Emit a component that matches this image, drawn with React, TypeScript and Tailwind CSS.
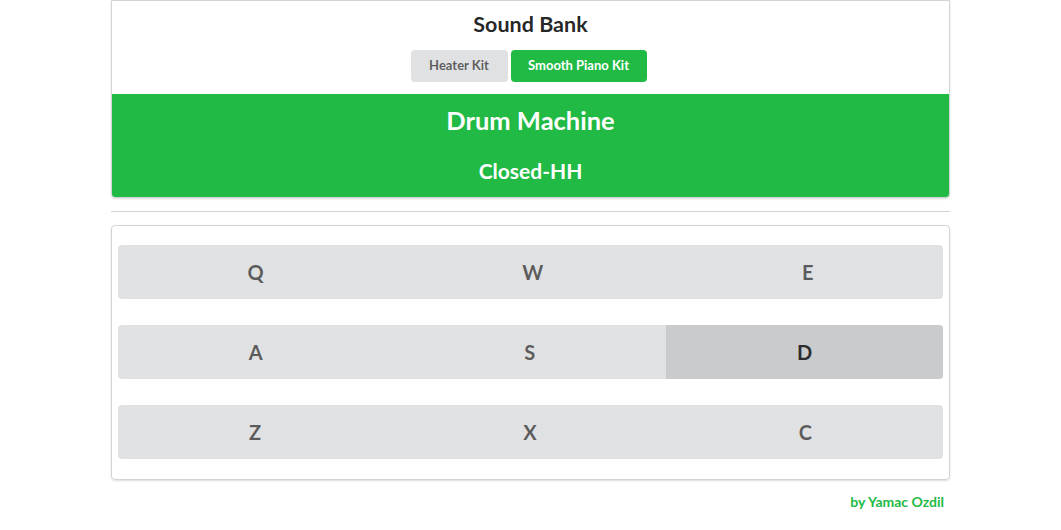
const rows = [
  ["Q", "W", "E"],
  ["A", "S", "D"],
  ["Z", "X", "C"],
];

const active = "D";

export default function App() {
  return (
    <div className="min-h-[530px] bg-white font-['Lato','Noto_Sans',sans-serif] text-[14px]">
      <div className="mx-auto w-[839px]">
        <div className="overflow-hidden rounded-b-[4px] border border-[#d4d4d5] shadow-[0_1px_2px_0_rgba(34,36,38,0.15)]">
          <div className="flex flex-col items-center pt-[9px] pb-[12px]">
            <h3 className="text-[21.5px] font-bold leading-[28px] text-[rgba(0,0,0,0.87)]">Sound Bank</h3>
            <div className="mt-[12px] mr-[4px] flex gap-[3px]">
              <button className="h-[32px] w-[97px] rounded-[4px] bg-[#e0e1e2] text-[13px] font-bold text-[rgba(0,0,0,0.6)]">
                Heater Kit
              </button>
              <button className="h-[32px] w-[136px] rounded-[4px] bg-[#21ba45] text-[13px] font-bold text-white">
                Smooth Piano Kit
              </button>
            </div>
          </div>
          <div className="flex h-[103px] flex-col items-center bg-[#21ba45] pt-[9px] text-white">
            <div className="text-[25.5px] font-bold leading-[34px]">Drum Machine</div>
            <div className="mt-[21px] text-[21px] font-bold leading-[26px]">Closed-HH</div>
          </div>
        </div>

        <div className="my-[13px] border-t border-[#d4d4d5]" />

        <div className="flex flex-col gap-[26px] rounded-[4px] border border-[#d4d4d5] px-[6px] pt-[19px] pb-[20px] shadow-[0_1px_2px_0_rgba(34,36,38,0.15)]">
          {rows.map((row) => (
            <div key={row.join("")} className="flex h-[54px] overflow-hidden rounded-[4px] bg-[#e0e1e2]">
              {row.map((k) => (
                <div
                  key={k}
                  className={
                    k === active
                      ? "flex flex-auto items-center justify-center bg-[#cacbcd] text-[20px] font-bold text-[rgba(0,0,0,0.8)]"
                      : "flex flex-auto items-center justify-center text-[20px] font-bold text-[rgba(0,0,0,0.6)]"
                  }
                >
                  {k}
                </div>
              ))}
            </div>
          ))}
        </div>

        <div className="mt-[11px] pr-[6px] text-right text-[14px] font-bold text-[#21ba45]">by Yamac Ozdil</div>
      </div>
    </div>
  );
}
